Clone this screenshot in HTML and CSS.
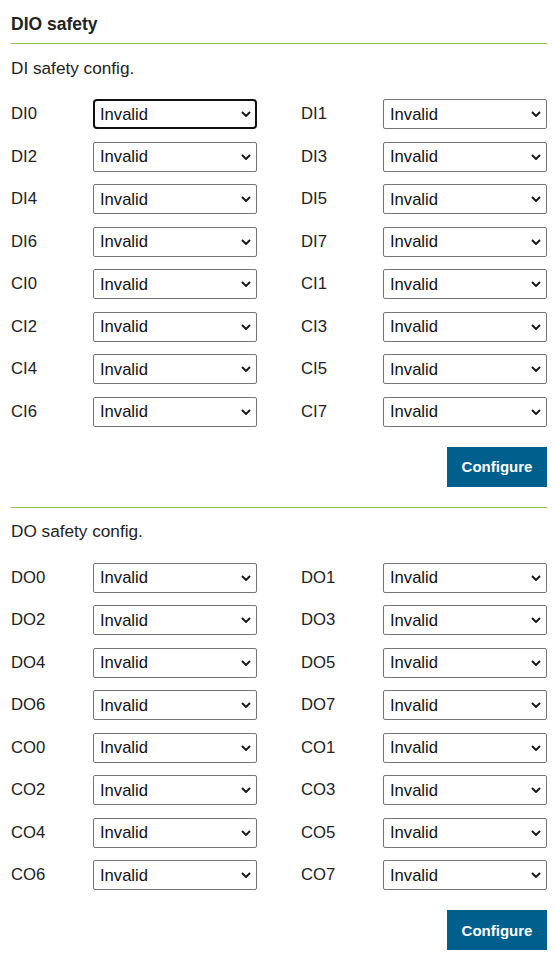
FILE: index.html
```html
<!DOCTYPE html>
<html>
<head>
<meta charset="utf-8">
<link rel="stylesheet" href="styles.css">
</head>
<body>
<div class="page">
  <h2 class="title">DIO safety</h2>

  <section class="block">
    <div class="subtitle">DI safety config.</div>
    <div class="grid">
      <div class="field"><label class="lbl">DI0</label><span class="selwrap"><select class="sel focused"><option>Invalid</option></select><svg class="chev" viewBox="0 0 10 6"><path d="M1 1L5 5L9 1"/></svg></span></div>
      <div class="field"><label class="lbl">DI1</label><span class="selwrap"><select class="sel"><option>Invalid</option></select><svg class="chev" viewBox="0 0 10 6"><path d="M1 1L5 5L9 1"/></svg></span></div>
      <div class="field"><label class="lbl">DI2</label><span class="selwrap"><select class="sel"><option>Invalid</option></select><svg class="chev" viewBox="0 0 10 6"><path d="M1 1L5 5L9 1"/></svg></span></div>
      <div class="field"><label class="lbl">DI3</label><span class="selwrap"><select class="sel"><option>Invalid</option></select><svg class="chev" viewBox="0 0 10 6"><path d="M1 1L5 5L9 1"/></svg></span></div>
      <div class="field"><label class="lbl">DI4</label><span class="selwrap"><select class="sel"><option>Invalid</option></select><svg class="chev" viewBox="0 0 10 6"><path d="M1 1L5 5L9 1"/></svg></span></div>
      <div class="field"><label class="lbl">DI5</label><span class="selwrap"><select class="sel"><option>Invalid</option></select><svg class="chev" viewBox="0 0 10 6"><path d="M1 1L5 5L9 1"/></svg></span></div>
      <div class="field"><label class="lbl">DI6</label><span class="selwrap"><select class="sel"><option>Invalid</option></select><svg class="chev" viewBox="0 0 10 6"><path d="M1 1L5 5L9 1"/></svg></span></div>
      <div class="field"><label class="lbl">DI7</label><span class="selwrap"><select class="sel"><option>Invalid</option></select><svg class="chev" viewBox="0 0 10 6"><path d="M1 1L5 5L9 1"/></svg></span></div>
      <div class="field"><label class="lbl">CI0</label><span class="selwrap"><select class="sel"><option>Invalid</option></select><svg class="chev" viewBox="0 0 10 6"><path d="M1 1L5 5L9 1"/></svg></span></div>
      <div class="field"><label class="lbl">CI1</label><span class="selwrap"><select class="sel"><option>Invalid</option></select><svg class="chev" viewBox="0 0 10 6"><path d="M1 1L5 5L9 1"/></svg></span></div>
      <div class="field"><label class="lbl">CI2</label><span class="selwrap"><select class="sel"><option>Invalid</option></select><svg class="chev" viewBox="0 0 10 6"><path d="M1 1L5 5L9 1"/></svg></span></div>
      <div class="field"><label class="lbl">CI3</label><span class="selwrap"><select class="sel"><option>Invalid</option></select><svg class="chev" viewBox="0 0 10 6"><path d="M1 1L5 5L9 1"/></svg></span></div>
      <div class="field"><label class="lbl">CI4</label><span class="selwrap"><select class="sel"><option>Invalid</option></select><svg class="chev" viewBox="0 0 10 6"><path d="M1 1L5 5L9 1"/></svg></span></div>
      <div class="field"><label class="lbl">CI5</label><span class="selwrap"><select class="sel"><option>Invalid</option></select><svg class="chev" viewBox="0 0 10 6"><path d="M1 1L5 5L9 1"/></svg></span></div>
      <div class="field"><label class="lbl">CI6</label><span class="selwrap"><select class="sel"><option>Invalid</option></select><svg class="chev" viewBox="0 0 10 6"><path d="M1 1L5 5L9 1"/></svg></span></div>
      <div class="field"><label class="lbl">CI7</label><span class="selwrap"><select class="sel"><option>Invalid</option></select><svg class="chev" viewBox="0 0 10 6"><path d="M1 1L5 5L9 1"/></svg></span></div>
    </div>
    <div class="actions"><button class="btn">Configure</button></div>
  </section>

  <section class="block second">
    <div class="subtitle">DO safety config.</div>
    <div class="grid">
      <div class="field"><label class="lbl">DO0</label><span class="selwrap"><select class="sel"><option>Invalid</option></select><svg class="chev" viewBox="0 0 10 6"><path d="M1 1L5 5L9 1"/></svg></span></div>
      <div class="field"><label class="lbl">DO1</label><span class="selwrap"><select class="sel"><option>Invalid</option></select><svg class="chev" viewBox="0 0 10 6"><path d="M1 1L5 5L9 1"/></svg></span></div>
      <div class="field"><label class="lbl">DO2</label><span class="selwrap"><select class="sel"><option>Invalid</option></select><svg class="chev" viewBox="0 0 10 6"><path d="M1 1L5 5L9 1"/></svg></span></div>
      <div class="field"><label class="lbl">DO3</label><span class="selwrap"><select class="sel"><option>Invalid</option></select><svg class="chev" viewBox="0 0 10 6"><path d="M1 1L5 5L9 1"/></svg></span></div>
      <div class="field"><label class="lbl">DO4</label><span class="selwrap"><select class="sel"><option>Invalid</option></select><svg class="chev" viewBox="0 0 10 6"><path d="M1 1L5 5L9 1"/></svg></span></div>
      <div class="field"><label class="lbl">DO5</label><span class="selwrap"><select class="sel"><option>Invalid</option></select><svg class="chev" viewBox="0 0 10 6"><path d="M1 1L5 5L9 1"/></svg></span></div>
      <div class="field"><label class="lbl">DO6</label><span class="selwrap"><select class="sel"><option>Invalid</option></select><svg class="chev" viewBox="0 0 10 6"><path d="M1 1L5 5L9 1"/></svg></span></div>
      <div class="field"><label class="lbl">DO7</label><span class="selwrap"><select class="sel"><option>Invalid</option></select><svg class="chev" viewBox="0 0 10 6"><path d="M1 1L5 5L9 1"/></svg></span></div>
      <div class="field"><label class="lbl">CO0</label><span class="selwrap"><select class="sel"><option>Invalid</option></select><svg class="chev" viewBox="0 0 10 6"><path d="M1 1L5 5L9 1"/></svg></span></div>
      <div class="field"><label class="lbl">CO1</label><span class="selwrap"><select class="sel"><option>Invalid</option></select><svg class="chev" viewBox="0 0 10 6"><path d="M1 1L5 5L9 1"/></svg></span></div>
      <div class="field"><label class="lbl">CO2</label><span class="selwrap"><select class="sel"><option>Invalid</option></select><svg class="chev" viewBox="0 0 10 6"><path d="M1 1L5 5L9 1"/></svg></span></div>
      <div class="field"><label class="lbl">CO3</label><span class="selwrap"><select class="sel"><option>Invalid</option></select><svg class="chev" viewBox="0 0 10 6"><path d="M1 1L5 5L9 1"/></svg></span></div>
      <div class="field"><label class="lbl">CO4</label><span class="selwrap"><select class="sel"><option>Invalid</option></select><svg class="chev" viewBox="0 0 10 6"><path d="M1 1L5 5L9 1"/></svg></span></div>
      <div class="field"><label class="lbl">CO5</label><span class="selwrap"><select class="sel"><option>Invalid</option></select><svg class="chev" viewBox="0 0 10 6"><path d="M1 1L5 5L9 1"/></svg></span></div>
      <div class="field"><label class="lbl">CO6</label><span class="selwrap"><select class="sel"><option>Invalid</option></select><svg class="chev" viewBox="0 0 10 6"><path d="M1 1L5 5L9 1"/></svg></span></div>
      <div class="field"><label class="lbl">CO7</label><span class="selwrap"><select class="sel"><option>Invalid</option></select><svg class="chev" viewBox="0 0 10 6"><path d="M1 1L5 5L9 1"/></svg></span></div>
    </div>
    <div class="actions"><button class="btn">Configure</button></div>
  </section>
</div>
</body>
</html>
```

FILE: styles.css
```css
html, body {
  margin: 0;
  padding: 0;
  background: #ffffff;
}

body {
  font-family: "Liberation Sans", Arial, sans-serif;
  font-size: 16px;
  color: #222222;
}

.page {
  padding: 0 9px 0 11px;
}

.title {
  margin: 0;
  padding: 14px 0 9px;
  font-size: 17.5px;
  line-height: 20px;
  font-weight: bold;
  color: #222222;
  border-bottom: 1px solid #8fbd47;
}

.block {
  display: flex;
  flex-direction: column;
}

.subtitle {
  margin-top: 14px;
  font-size: 17.2px;
  line-height: 20px;
}

.second {
  margin-top: 20px;
  border-top: 1px solid #8fbd47;
}

.second .subtitle {
  margin-top: 13px;
}

.second .grid {
  margin-top: 22px;
}

.grid {
  margin-top: 21px;
  display: grid;
  grid-template-columns: 246px 246px;
  column-gap: 44px;
  row-gap: 12.5px;
}

.field {
  display: flex;
  align-items: center;
}

.lbl {
  width: 82px;
  flex: none;
  font-size: 16.7px;
  line-height: 20px;
  color: #222222;
}

.selwrap {
  position: relative;
  display: block;
  width: 164px;
  height: 30px;
  flex: none;
}

.sel {
  -webkit-appearance: none;
  appearance: none;
  display: block;
  box-sizing: border-box;
  width: 164px;
  height: 30px;
  margin: 0;
  padding: 0 20px 0 6px;
  font-family: "Liberation Sans", Arial, sans-serif;
  font-size: 16.6px;
  color: #111111;
  background-color: #ffffff;
  border: 1px solid #767676;
  border-radius: 2px;
  outline: none;
}

.sel.focused {
  border: 2px solid #101010;
  border-radius: 4px;
  padding-left: 5px;
}

.chev {
  position: absolute;
  right: 6px;
  top: 12px;
  width: 10px;
  height: 6px;
  fill: none;
  stroke: #1a1a1a;
  stroke-width: 2;
  pointer-events: none;
}

.actions {
  display: flex;
  justify-content: flex-end;
  margin-top: 20px;
}

.btn {
  width: 100px;
  height: 40px;
  margin: 0;
  padding: 0;
  border: none;
  border-radius: 0;
  background: #005f8c;
  color: #ffffff;
  font-family: "Liberation Sans", Arial, sans-serif;
  font-size: 15px;
  font-weight: bold;
}
```
